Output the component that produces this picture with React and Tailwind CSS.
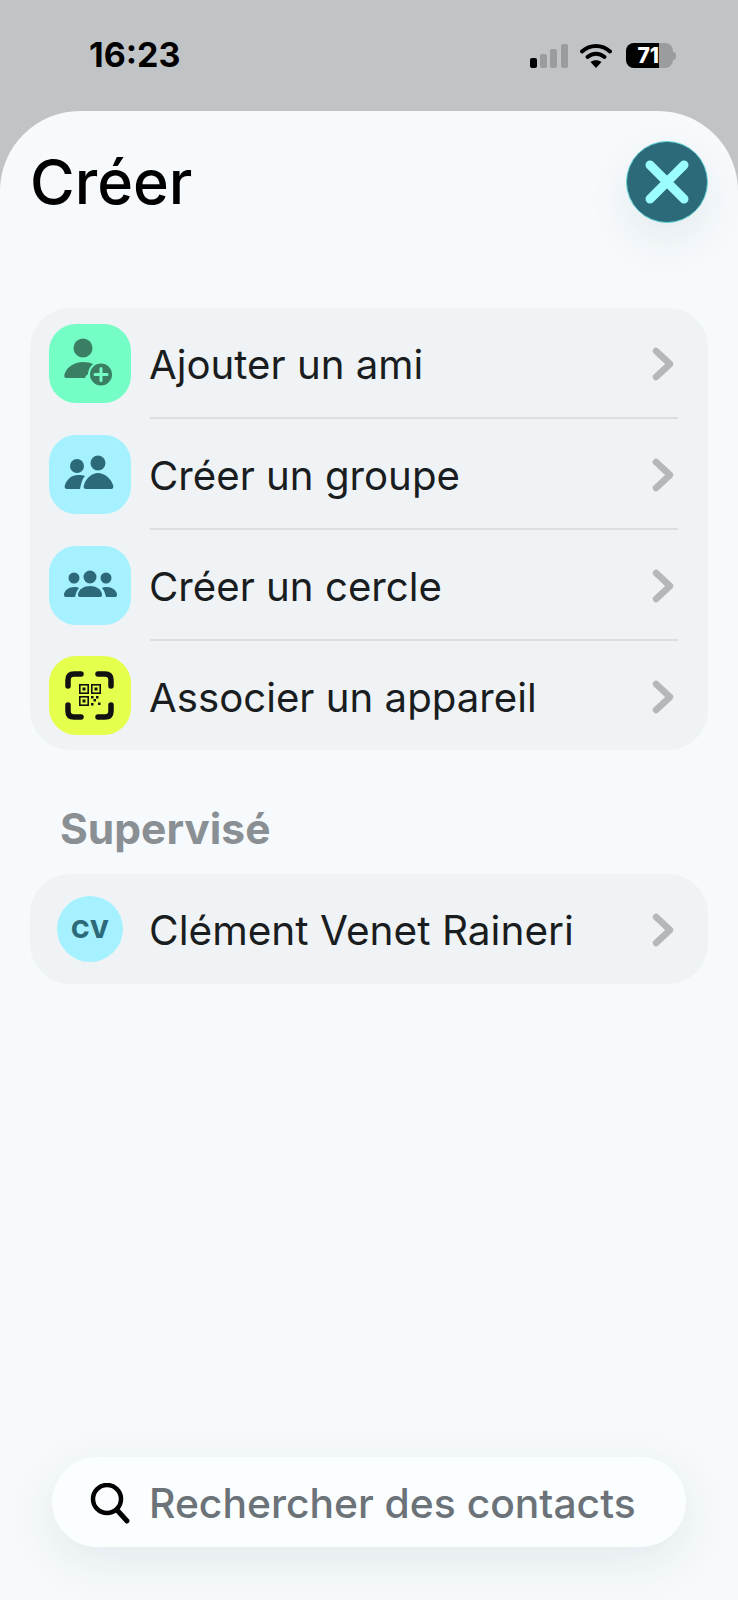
import React from 'react';

const FONT = "font-['Inter','Noto_Sans',sans-serif]";

const AddFriendIcon = () => (
  <svg width="80" height="80" viewBox="0 0 80 80">
    <circle cx="34" cy="24" r="9.5" fill="#3a7f63" />
    <path d="M17 54c-2 0-2-3-1-5 3-7 10-11 18-11s14 3 17 9c-8 0-14 3-15 7H17z" fill="#3a7f63" />
    <circle cx="52" cy="50.500" r="12" fill="#3a7f63" stroke="#75fdc6" strokeWidth="2" />
    <path d="M52 44.500v12M46 50.500h12" stroke="#75fdc6" strokeWidth="3" strokeLinecap="round" />
  </svg>
);

const GroupIcon = () => (
  <svg width="80" height="80" viewBox="0 0 80 80">
    <circle cx="28" cy="31" r="7" fill="#2c6a79" />
    <circle cx="49" cy="28" r="7.5" fill="#2c6a79" />
    <path d="M18 54c-2 0-3-2-2-4 2-6 7-10 13-10 3 0 5 0 7 1-3 3-4 8-5 13H18z" fill="#2c6a79" />
    <path d="M37 54c-2 0-3-2-2-4 2-7 8-12 14-12s13 5 15 12c1 2 0 4-2 4H37z" fill="#2c6a79" />
  </svg>
);

const CircleIcon = () => (
  <svg width="80" height="80" viewBox="0 0 80 80">
    <circle cx="25" cy="32" r="5.5" fill="#2c6a79" />
    <circle cx="41" cy="31" r="6.5" fill="#2c6a79" />
    <circle cx="57" cy="32" r="5.5" fill="#2c6a79" />
    <path d="M17 51c-2 0-2-1-2-3 1-4 5-7 10-7 2 0 4 0 5 1-2 2-3 5-4 9h-9z" fill="#2c6a79" />
    <path d="M66 51c2 0 2-1 2-3-1-4-5-7-10-7-2 0-4 0-5 1 2 2 3 5 4 9h9z" fill="#2c6a79" />
    <path d="M31 51c-2 0-2-2-2-3 1-5 6-8 12-8s11 3 12 8c0 1 0 3-2 3H31z" fill="#2c6a79" />
  </svg>
);

const QrIcon = () => (
  <svg width="80" height="80" viewBox="0 0 80 80">
    <g fill="none" stroke="#111" strokeWidth="5.5" strokeLinecap="round">
      <path d="M19 30v-6c0-4 2-6 6-6h7" />
      <path d="M62 30v-6c0-4-2-6-6-6h-7" />
      <path d="M19 49v6c0 4 2 6 6 6h7" />
      <path d="M62 49v6c0 4-2 6-6 6h-7" />
    </g>
    <g fill="none" stroke="#111" strokeWidth="1.6">
      <rect x="30.8" y="28.8" width="8.4" height="8.4" />
      <rect x="42.8" y="28.8" width="8.4" height="8.4" />
      <rect x="30.8" y="40.8" width="8.4" height="8.4" />
    </g>
    <g fill="#111">
      <rect x="33.5" y="31.5" width="3" height="3" />
      <rect x="45.5" y="31.5" width="3" height="3" />
      <rect x="33.5" y="43.5" width="3" height="3" />
      <rect x="42" y="40" width="2.5" height="2.5" />
      <rect x="47" y="40" width="2.5" height="2.5" />
      <rect x="44.5" y="43" width="2.5" height="2.5" />
      <rect x="42" y="47" width="2.5" height="2.5" />
      <rect x="49" y="46.5" width="2.5" height="2.5" />
    </g>
  </svg>
);

const Chevron = () => (
  <svg width="24" height="36" viewBox="0 0 24 36" className="mt-[2px] shrink-0">
    <path d="M5 5l14 13L5 31" fill="none" stroke="#b5b8bb" strokeWidth="6.5" strokeLinecap="round" strokeLinejoin="round" />
  </svg>
);

const actions = [
  { label: 'Ajouter un ami', bg: 'bg-[#75fdc6]', Icon: AddFriendIcon },
  { label: 'Créer un groupe', bg: 'bg-[#a6f1ff]', Icon: GroupIcon },
  { label: 'Créer un cercle', bg: 'bg-[#a6f1ff]', Icon: CircleIcon },
  { label: 'Associer un appareil', bg: 'bg-[#e6ff4d]', Icon: QrIcon },
];

const StatusBar = () => (
  <div className="flex h-[111px] items-start justify-between pl-[89px] pr-[62px] pt-[35px]">
    <span className="text-[34px] leading-[40px] font-bold text-black">16:23</span>
    <div className="flex items-center gap-[12px] pt-[8px]">
      <svg width="38" height="24" viewBox="0 0 38 24">
        <rect x="0" y="14" width="7" height="10" rx="2" fill="#000" />
        <rect x="10" y="10" width="7" height="14" rx="2" fill="#9a9c9e" />
        <rect x="20" y="5" width="7" height="19" rx="2" fill="#9a9c9e" />
        <rect x="31" y="0" width="7" height="24" rx="2" fill="#9a9c9e" />
      </svg>
      <svg width="32" height="25" viewBox="0 0 32 25">
        <path d="M2 8.5C10 1 22 1 30 8.5" fill="none" stroke="#000" strokeWidth="4" strokeLinecap="round" />
        <path d="M7.5 14c5-4.5 12-4.500 17 0" fill="none" stroke="#000" strokeWidth="4" strokeLinecap="round" />
        <path d="M16 25l-5.500-6c3-2.500 8-2.500 11 0z" fill="#000" />
      </svg>
      <div className="ml-[2px] flex items-center">
        <div className="flex h-[25px] w-[47px] overflow-hidden rounded-[8px] bg-[#9a9c9e]">
          <div className="flex w-[33px] items-center justify-end bg-black">
            <span className="text-[21px] leading-none font-extrabold text-white">71</span>
          </div>
        </div>
        <div className="h-[8px] w-[3px] rounded-r-full bg-[#9a9c9e]" />
      </div>
    </div>
  </div>
);

export default function App() {
  return (
    <div className={`${FONT} flex h-[1600px] w-[738px] flex-col overflow-hidden bg-gradient-to-b from-[#c1c4c6] from-[11%] to-[#e8ecee] to-[13.5%]`}>
      <StatusBar />
      <div className="flex flex-1 flex-col rounded-t-[80px] bg-[#f6fafd] px-[30px] pt-[30px]">
        <div className="flex items-center justify-between">
          <h1 className="text-[61px] leading-[72px] font-medium text-black">Créer</h1>
          <button className="flex h-[82px] w-[82px] items-center justify-center rounded-full border border-[#63d5d6] bg-[#2c6a79] shadow-[0_18px_44px_rgba(30,50,60,0.08)]">
            <svg width="56" height="56" viewBox="0 0 56 56">
              <path d="M11 11l34 34M45 11L11 45" stroke="#9cfdfd" strokeWidth="9" strokeLinecap="round" />
            </svg>
          </button>
        </div>

        <div className="mt-[85px] h-[442px] rounded-[40px] bg-[#eff3f6]">
          {actions.map(({ label, bg, Icon }, index) => (
            <div key={label} className={`flex items-center pl-[19px] ${index < 3 ? 'h-[111px]' : 'h-[109px]'}`}>
              <span className={`flex h-[79px] w-[82px] shrink-0 items-center justify-start rounded-[27px] ${bg}`}>
                <Icon />
              </span>
              <div className={`ml-[19px] mr-[30px] flex h-full flex-1 items-center justify-between pr-[3px] ${index < 3 ? 'border-b-2 border-[#dcdfe2]' : ''}`}>
                <span className="ml-[-1px] pt-[6px] text-[40.200px] leading-none text-[#1a1d20]">{label}</span>
                <Chevron />
              </div>
            </div>
          ))}
        </div>

        <h2 className="mt-[55px] pl-[30px] text-[42.500px] leading-[48px] font-bold text-[#8a8f93]">Supervisé</h2>

        <div className="mt-[21px] flex h-[110px] items-center rounded-[40px] bg-[#eff3f6] pl-[27px] pr-[33px]">
          <span className="flex h-[66px] w-[66px] shrink-0 items-center justify-center rounded-full bg-[#a6f1ff] pt-[2px] text-[25px] font-extrabold text-[#2c6a79]">
            CV
          </span>
          <span className="ml-[26px] flex-1 pt-[4px] text-[40.600px] leading-none text-[#1a1d20]">Clément Venet Raineri</span>
          <Chevron />
        </div>

        <div className="mx-[22px] mb-[53px] mt-auto flex h-[90px] items-center rounded-full bg-[#fbfeff] pl-[38px] shadow-[0_14px_50px_rgba(30,50,60,0.09)]">
          <svg width="42" height="42" viewBox="0 0 42 42" className="mt-[3px] shrink-0">
            <circle cx="17" cy="16" r="14" fill="none" stroke="#000" strokeWidth="4.500" />
            <path d="M27 27l10 11" stroke="#000" strokeWidth="5" strokeLinecap="round" />
          </svg>
          <span className="ml-[17px] pt-[2px] text-[40.800px] leading-none font-medium text-[#6b7278]">Rechercher des contacts</span>
        </div>
      </div>
    </div>
  );
}
